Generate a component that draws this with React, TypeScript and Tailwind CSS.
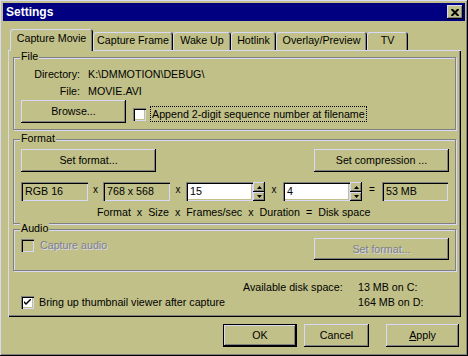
import React from 'react'

const raised = 'bg-[#c0c088] shadow-[inset_-1px_-1px_#000,inset_1px_1px_#d8d8f8,inset_-2px_-2px_#808080]'
const sunken = 'shadow-[inset_1px_1px_#808080,inset_2px_2px_#000,inset_-1px_-1px_#d8d8f8,inset_-2px_-2px_#c0c088]'

function Button({ children, className = '', disabled = false, primary = false }: { children: React.ReactNode; className?: string; disabled?: boolean; primary?: boolean }) {
  return (
    <div
      className={`flex items-center justify-center ${raised} ${primary ? 'border border-black' : ''} ${
        disabled ? 'text-[#808080] [text-shadow:1px_1px_0_#d8d8f8]' : 'text-black'
      } ${className}`}
    >
      {children}
    </div>
  )
}

function Check({ checked = false, disabled = false }: { checked?: boolean; disabled?: boolean }) {
  return (
    <div className={`w-[13px] h-[13px] shrink-0 flex items-center justify-center ${disabled ? 'bg-[#c0c088]' : 'bg-white'} ${sunken}`}>
      {checked && (
        <svg width="7" height="7" viewBox="0 0 7 7">
          <path d="M0 2 L0 4 L2 6 L7 1 L7 -1 L2 4 Z" fill="#000" />
        </svg>
      )}
    </div>
  )
}

function Group({ label, className, children }: { label: string; className: string; children?: React.ReactNode }) {
  return (
    <div className={`relative border border-[#808080] shadow-[inset_1px_1px_0_#d8d8f8,1px_1px_0_#d8d8f8] ${className}`}>
      <span className="absolute -top-[8px] left-[6px] bg-[#c0c088] px-[1px] leading-[13px]">{label}</span>
      {children}
    </div>
  )
}

function Field({ value, className = '' }: { value: string; className?: string }) {
  return <div className={`h-[19px] leading-[19px] pl-[4px] bg-[#c0c088] ${sunken} ${className}`}>{value}</div>
}

function Spin({ value }: { value: string }) {
  return (
    <div className="flex">
      <div className={`w-[67px] h-[19px] leading-[19px] pl-[4px] bg-white ${sunken}`}>{value}</div>
      <div className="flex flex-col w-[12px] h-[19px]">
        <div className={`h-[10px] flex items-center justify-center ${raised}`}>
          <svg width="5" height="3" viewBox="0 0 5 3">
            <path d="M2.5 0 L5 3 L0 3 Z" fill="#000" />
          </svg>
        </div>
        <div className={`h-[9px] flex items-center justify-center ${raised}`}>
          <svg width="5" height="3" viewBox="0 0 5 3">
            <path d="M0 0 L5 0 L2.5 3 Z" fill="#000" />
          </svg>
        </div>
      </div>
    </div>
  )
}

function Times({ w, sign = 'x' }: { w: string; sign?: string }) {
  return <span className={`${w} text-center self-start leading-[13px] mt-[1px] text-[10px]`}>{sign}</span>
}

const tabs = ['Capture Movie', 'Capture Frame', 'Wake Up', 'Hotlink', 'Overlay/Preview', 'TV']
const tabWidths = ['w-[83px]', 'w-[80px]', 'w-[58px]', 'w-[45px]', 'w-[91px]', 'w-[41px]']

export default function App() {
  return (
    <div className="w-[468px] h-[356px] p-[3px] flex flex-col bg-[#c0c088] text-[10.7px] text-black font-['Liberation_Sans',Arial,sans-serif] shadow-[inset_-1px_-1px_#000,inset_1px_1px_#d8d8f8,inset_-2px_-2px_#808080]">
      {/* title bar */}
      <div className="h-[18px] bg-[#000080] flex items-center justify-between pl-[3px] pr-[2px]">
        <span className="text-white font-bold text-[12px] leading-[18px]">Settings</span>
        <div className={`w-[16px] h-[14px] flex items-center justify-center ${raised}`}>
          <svg width="8" height="7" viewBox="0 0 8 7">
            <path d="M0.5 0 L7.5 7 M7.5 0 L0.5 7" stroke="#000" strokeWidth="2" />
          </svg>
        </div>
      </div>

      <div className="flex flex-col pl-[5px] pr-[4px] mt-[8px]">
        {/* tabs */}
        <div className="flex items-end h-[21px] pl-[2px]">
          {tabs.map((t, i) => (
            <div
              key={t}
              className={`${tabWidths[i]} flex justify-center rounded-t-[3px] bg-[#c0c088] shadow-[inset_1px_1px_#d8d8f8,inset_-1px_0_#000,inset_-2px_0_#808080] ${
                i === 0 ? 'h-[22px] -mb-px relative z-10 pt-[3px]' : 'h-[18px] pt-[2px]'
              }`}
            >
              <span className="leading-[13px] whitespace-nowrap">{t}</span>
            </div>
          ))}
        </div>

        {/* panel */}
        <div className="h-[267px] flex flex-col px-[5px] pt-[7px] shadow-[inset_1px_1px_#d8d8f8,inset_-1px_-1px_#000,inset_-2px_-2px_#808080]">
          <Group label="File" className="h-[73px] pt-[10px] pl-[7px]">
            <div className="flex h-[13px] leading-[13px]">
              <span className="w-[59px] text-right">Directory:</span>
              <span className="ml-[8px]">K:\DMMOTION\DEBUG\</span>
            </div>
            <div className="flex h-[13px] leading-[13px] mt-[4px]">
              <span className="w-[59px] text-right">File:</span>
              <span className="ml-[8px]">MOVIE.AVI</span>
            </div>
            <div className="flex items-end mt-[2px]">
              <Button className="w-[105px] h-[23px]">Browse...</Button>
              <div className="flex items-center ml-[7px] mb-[1px]">
                <Check />
                <span className="ml-[4px] h-[16px] leading-[14px] px-[1px] border border-dotted border-black">
                  Append 2-digit sequence number at filename
                </span>
              </div>
            </div>
          </Group>

          <Group label="Format" className="h-[85px] mt-[9px] pt-[9px] pl-[7px] pr-[6px]">
            <div className="flex justify-between">
              <Button className="w-[135px] h-[23px]">Set format...</Button>
              <Button className="w-[135px] h-[23px]">Set compression ...</Button>
            </div>
            <div className="flex mt-[10px]">
              <Field value="RGB 16" className="w-[67px]" />
              <Times w="w-[15px]" />
              <Field value="768 x 568" className="w-[67px]" />
              <Times w="w-[16px]" />
              <Spin value="15" />
              <Times w="w-[18px]" />
              <Spin value="4" />
              <Times w="w-[20px]" sign="=" />
              <Field value="53 MB" className="w-[66px]" />
            </div>
            <div className="flex gap-[6px] ml-[76px] mt-[5px] leading-[13px]">
              <span>Format</span>
              <span>x</span>
              <span>Size</span>
              <span>x</span>
              <span>Frames/sec</span>
              <span>x</span>
              <span>Duration</span>
              <span>=</span>
              <span>Disk space</span>
            </div>
          </Group>

          <Group label="Audio" className="h-[42px] mt-[5px] pt-[8px] pl-[7px] pr-[6px]">
            <div className="flex justify-between items-start">
              <div className="flex items-center mt-[1px]">
                <Check disabled />
                <span className="ml-[6px] leading-[13px] text-[#808080] [text-shadow:1px_1px_0_#d8d8f8]">Capture audio</span>
              </div>
              <Button disabled className="w-[135px] h-[22px]">Set format...</Button>
            </div>
          </Group>

          <div className="grid grid-cols-[222px_115px_auto] grid-rows-[15px_15px] ml-[8px] mt-[9px] leading-[15px]">
            <span />
            <span>Available disk space:</span>
            <span>13 MB on C:</span>
            <div className="flex items-center">
              <Check checked />
              <span className="ml-[5px]">Bring up thumbnail viewer after capture</span>
            </div>
            <span />
            <span>164 MB on D:</span>
          </div>
        </div>

        {/* bottom buttons */}
        <div className="flex justify-end mt-[7px] pr-[2px]">
          <Button primary className="w-[74px] h-[23px]">OK</Button>
          <Button className="w-[65px] h-[23px] ml-[7px]">Cancel</Button>
          <Button className="w-[73px] h-[23px] ml-[17px]">
            <span><span className="underline">A</span>pply</span>
          </Button>
        </div>
      </div>
    </div>
  )
}
